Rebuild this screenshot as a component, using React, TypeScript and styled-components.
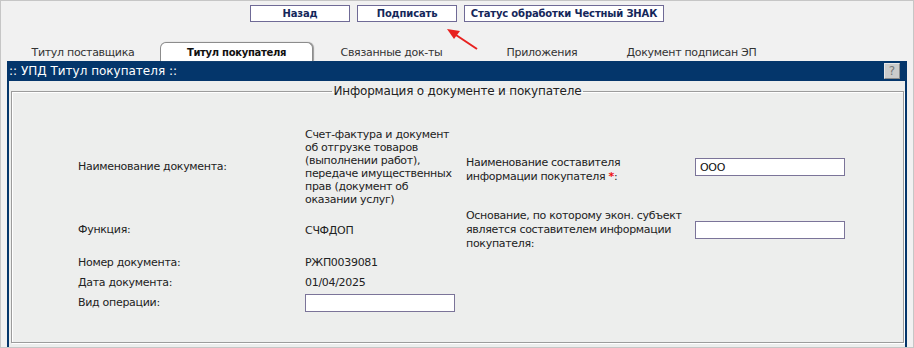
import styled, { createGlobalStyle } from 'styled-components'

const GlobalStyle = createGlobalStyle`
  body {
    margin: 0;
    font-family: "DejaVu Sans", Verdana, sans-serif;
  }
`

const NAVY = '#04366b'

const Page = styled.div`
  position: relative;
  width: 914px;
  height: 348px;
  box-sizing: border-box;
  border: 1px solid #c6c6c6;
  background: #f1f1f1;
  overflow: hidden;
`

const Toolbar = styled.div`
  display: flex;
  justify-content: center;
  gap: 7px;
  padding-top: 4px;
`

const ToolButton = styled.button<{ $width: number }>`
  width: ${(p) => p.$width}px;
  height: 17px;
  padding: 0;
  border: 1px solid #6f6a96;
  background: #fff;
  color: #14275a;
  font-family: "DejaVu Sans", Verdana, sans-serif;
  font-size: 10px;
  font-weight: 700;
  letter-spacing: -0.15px;
  cursor: pointer;
`

const Arrow = styled.svg`
  position: absolute;
  left: 440px;
  top: 23px;
`

const Tabs = styled.div`
  display: flex;
  padding-left: 5px;
  margin-top: 20px;
  height: 19px;
`

const Tab = styled.div<{ $width: number; $active?: boolean }>`
  width: ${(p) => p.$width}px;
  box-sizing: border-box;
  display: flex;
  align-items: center;
  justify-content: center;
  font-size: ${(p) => (p.$active ? '10px' : '11px')};
  font-weight: ${(p) => (p.$active ? 700 : 400)};
  letter-spacing: -0.3px;
  color: ${(p) => (p.$active ? '#111' : '#333')};
  background: ${(p) => (p.$active ? '#fff' : 'transparent')};
  border: ${(p) => (p.$active ? '1px solid #8c8c8c' : '1px solid transparent')};
  border-bottom: none;
  border-radius: 6px 6px 0 0;
  box-shadow: ${(p) => (p.$active ? '1px 0 1px #9a9a9a' : 'none')};
  padding-top: 1px;
`

const Panel = styled.div`
  margin: 0 6px;
  border-left: 2px solid ${NAVY};
  border-right: 2px solid ${NAVY};
  background: #edeeed;
  height: 300px;
`

const PanelHeader = styled.div`
  height: 20px;
  background: ${NAVY};
  display: flex;
  align-items: center;
  justify-content: space-between;
  padding: 0 5px 0 0;
  color: #fff;
  font-size: 12px;
`

const HelpButton = styled.div`
  width: 14px;
  height: 14px;
  border: 1px solid;
  border-color: #e6e6e6 #8a8a8a #8a8a8a #e6e6e6;
  background: #cbcbcb;
  color: #777;
  font-size: 12px;
  line-height: 14px;
  text-align: center;
`

const PanelBody = styled.div`
  padding: 2px 1px 4px 2px;
`

const Group = styled.fieldset`
  margin: 0;
  padding: 29px 0 30px 0;
  border: 1px solid #9c9c9c;
  box-shadow: 1px 1px 0 #fff, inset 1px 1px 0 #fff;
`

const Legend = styled.legend`
  margin: 0 auto;
  padding: 0 2px;
  font-size: 12px;
  letter-spacing: -0.2px;
  line-height: 16px;
  color: #222;
`

const Form = styled.div`
  display: grid;
  grid-template-columns: 227px 161px 229px 1fr;
  grid-template-rows: auto auto 17px 17px auto;
  row-gap: 3px;
  align-items: center;
  padding-left: 66px;
  font-size: 11px;
  letter-spacing: -0.3px;
  color: #222;
`

const Label = styled.div<{ $shift?: number }>`
  line-height: 14px;
  padding-top: ${(p) => p.$shift ?? 0}px;
`

const Value = styled.div`
  line-height: 13px;
  width: 152px;
`

const Required = styled.span`
  color: #f01010;
  font-weight: 700;
`

const Field = styled.input`
  width: 150px;
  height: 18px;
  box-sizing: border-box;
  border: 1px solid #7b7499;
  background: #fff;
  padding: 0 4px;
  font-family: "DejaVu Sans", Verdana, sans-serif;
  font-size: 11px;
  letter-spacing: -0.3px;
  color: #111;
  outline: none;
`

const tabs = [
  { title: 'Титул поставщика', width: 154 },
  { title: 'Титул покупателя', width: 153, active: true },
  { title: 'Связанные док-ты', width: 157 },
  { title: 'Приложения', width: 144 },
  { title: 'Документ подписан ЭП', width: 155 },
]

const App = () => (
  <>
    <GlobalStyle />
    <Page>
      <Toolbar>
        <ToolButton $width={100}>Назад</ToolButton>
        <ToolButton $width={100}>Подписать</ToolButton>
        <ToolButton $width={200}>Статус обработки Честный ЗНАК</ToolButton>
      </Toolbar>
      <Arrow width="44" height="30" viewBox="0 0 44 30">
        <line x1="36" y1="25" x2="12" y2="9" stroke="#e8211f" strokeWidth="2" />
        <polygon points="6,5 19,7 13,15" fill="#e8211f" />
      </Arrow>
      <Tabs>
        {tabs.map((t) => (
          <Tab key={t.title} $width={t.width} $active={t.active}>
            {t.title}
          </Tab>
        ))}
      </Tabs>
      <Panel>
        <PanelHeader>
          <span>:: УПД Титул покупателя ::</span>
          <HelpButton>?</HelpButton>
        </PanelHeader>
        <PanelBody>
          <Group>
            <Legend>Информация о документе и покупателе</Legend>
            <Form>
              <Label>Наименование документа:</Label>
              <Value>
                Счет-фактура и документ об отгрузке товаров (выполнении работ), передаче
                имущественных прав (документ об оказании услуг)
              </Value>
              <Label $shift={5}>
                Наименование составителя
                <br />
                информации покупателя <Required>*</Required>:
              </Label>
              <Field defaultValue="ООО" />

              <Label>Функция:</Label>
              <Value>СЧФДОП</Value>
              <Label>
                Основание, по которому экон. субъект является составителем информации
                покупателя:
              </Label>
              <Field />

              <Label>Номер документа:</Label>
              <Value>РЖП0039081</Value>
              <div />
              <div />

              <Label>Дата документа:</Label>
              <Value>01/04/2025</Value>
              <div />
              <div />

              <Label>Вид операции:</Label>
              <Field />
              <div />
              <div />
            </Form>
          </Group>
        </PanelBody>
      </Panel>
    </Page>
  </>
)

export default App
